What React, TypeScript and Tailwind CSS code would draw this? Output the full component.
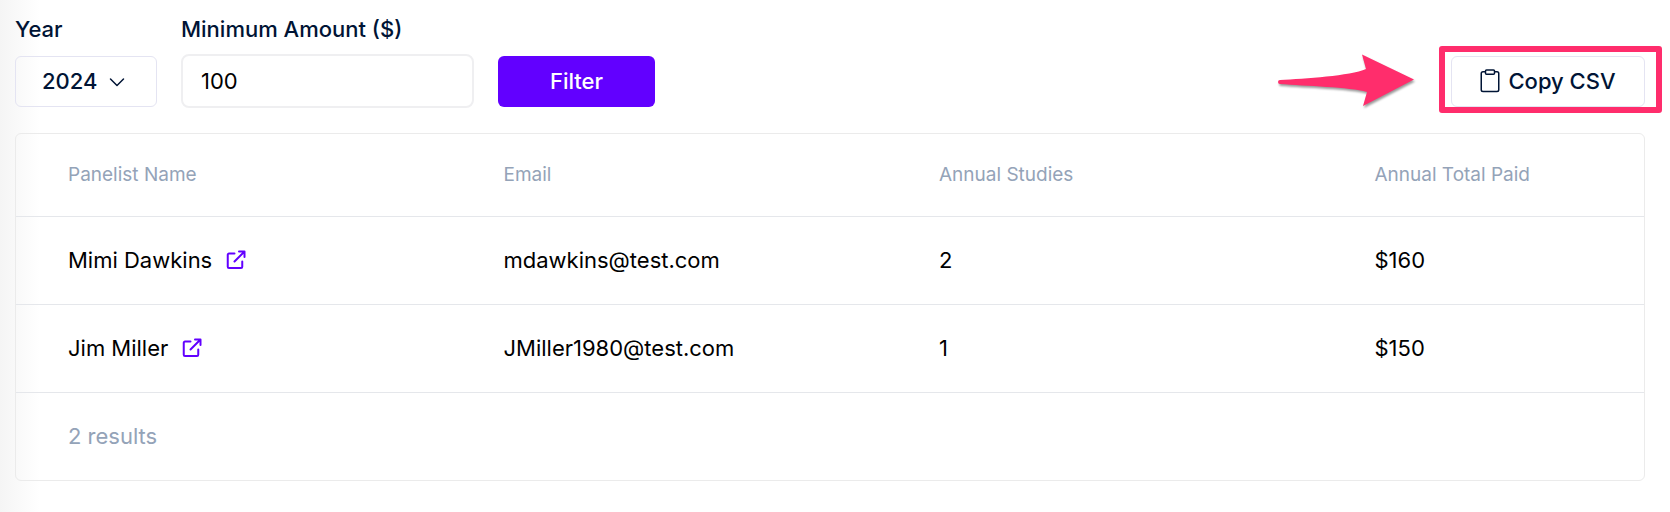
import { useState } from 'react';

type Panelist = { name: string; email: string; studies: number; paid: string };

const panelists: Panelist[] = [
  { name: 'Mimi Dawkins', email: 'mdawkins@test.com', studies: 2, paid: '$160' },
  { name: 'Jim Miller', email: 'JMiller1980@test.com', studies: 1, paid: '$150' },
];

const columns = ['Panelist Name', 'Email', 'Annual Studies', 'Annual Total Paid'];

function ChevronIcon() {
  return (
    <svg
      className="pointer-events-none absolute right-8 h-4 w-4"
      viewBox="0 0 16 16"
      fill="none"
      stroke="#001435"
      strokeWidth="1.5"
      strokeLinecap="round"
      strokeLinejoin="round"
      aria-hidden="true"
    >
      <path d="M1.500 6 8 12.500l6.500-6.500" />
    </svg>
  );
}

function ClipboardIcon() {
  return (
    <svg className="h-6 w-5" viewBox="0 0 20 24" fill="none" stroke="#001435" strokeWidth="1.5" aria-hidden="true">
      <path d="M5.500 2.750H3A1.750 1.750 0 0 0 1.250 4.500v16.250A1.750 1.750 0 0 0 3 22.500h14a1.750 1.750 0 0 0 1.750-1.750V4.500A1.750 1.750 0 0 0 17 2.750h-2.500" />
      <rect x="5.500" y="1" width="9" height="4.250" rx="1" />
    </svg>
  );
}

function ExternalLinkIcon() {
  return (
    <svg
      className="h-5 w-5"
      viewBox="0 0 20 20"
      fill="none"
      stroke="#6200ff"
      strokeWidth="2"
      strokeLinecap="round"
      strokeLinejoin="round"
      aria-hidden="true"
    >
      <path d="M8.500 3.500H3A1.250 1.250 0 0 0 1.750 4.750v12A1.250 1.250 0 0 0 3 18h12a1.250 1.250 0 0 0 1.250-1.250V11.500" />
      <path d="M8.500 11.500 18 2M13 1.500h5.500V7" />
    </svg>
  );
}

function Arrow() {
  return (
    <svg
      className="-my-1 h-15 w-36 drop-shadow-[1px_2px_1px_rgba(0,0,0,0.4)]"
      viewBox="0 0 144 60"
      fill="#ff2d6c"
      aria-hidden="true"
    >
      <path d="M5 29C30 27.500 75 25 91 18L87 3.500 139 28.500 88 55 92 41C75 36 30 35 5 33A2 2 0 0 1 5 29Z" />
    </svg>
  );
}

export default function App() {
  const [year, setYear] = useState('2024');
  const [amount, setAmount] = useState('100');

  return (
    <main className="min-h-screen bg-white bg-linear-to-r from-[#f5f5f5] to-white to-[40px] pt-[15px] pr-[25px] pb-[30px] pl-[15px] font-['Inter',sans-serif] text-[22px] leading-7 text-black">
      <div className="grid grid-cols-[142px_293px_157px_1fr] items-center gap-x-6 gap-y-[11px] text-[#001435]">
        <label htmlFor="year" className="font-medium">
          Year
        </label>
        <label htmlFor="amount" className="col-span-3 font-medium">
          Minimum Amount ($)
        </label>
        <div className="relative flex items-center">
          <select
            id="year"
            value={year}
            onChange={(e) => setYear(e.target.value)}
            className="h-[51px] w-full appearance-none rounded-md border border-[#e4e4f2] bg-transparent pl-[26px] font-medium"
          >
            <option>2024</option>
            <option>2023</option>
          </select>
          <ChevronIcon />
        </div>
        <input
          id="amount"
          value={amount}
          inputMode="numeric"
          onChange={(e) => setAmount(e.target.value)}
          className="h-[54px] w-full rounded-lg border-2 border-[#efeff1] bg-white px-[18px] text-black"
        />
        <button type="button" className="h-[51px] rounded-md bg-[#6200ff] font-medium text-white">
          Filter
        </button>
        <div className="flex items-center justify-end gap-8">
          <Arrow />
          <div className="relative">
            <button
              type="button"
              className="flex h-[51px] w-[194px] items-center justify-center gap-2 rounded-md border border-[#e4e4f2] font-medium"
            >
              <ClipboardIcon />
              Copy CSV
            </button>
            <div className="pointer-events-none absolute -top-[10px] -right-[17px] -bottom-[6px] -left-[12px] rounded-[3px] border-6 border-[#ff2d6c]" />
          </div>
        </div>
      </div>

      <div className="mt-[25px] rounded-md border border-[#ebebeb]">
        <table className="w-full table-fixed text-left">
          <thead>
            <tr className="h-[82px] border-b border-[#e5e7eb] text-[19px] text-[#94a3b8]">
              {columns.map((column) => (
                <th key={column} scope="col" className="w-[26.75%] pl-[52px] font-normal last:w-auto">
                  {column}
                </th>
              ))}
            </tr>
          </thead>
          <tbody>
            {panelists.map((p) => (
              <tr key={p.email} className="h-[88px] border-b border-[#e5e7eb]">
                <td className="pl-[52px]">
                  <div className="flex items-center gap-[14px]">
                    {p.name}
                    <a href="#panelist" aria-label={`Open ${p.name}`}>
                      <ExternalLinkIcon />
                    </a>
                  </div>
                </td>
                <td className="pl-[52px]">{p.email}</td>
                <td className="pl-[52px]">{p.studies}</td>
                <td className="pl-[52px]">{p.paid}</td>
              </tr>
            ))}
          </tbody>
          <tfoot>
            <tr className="h-[88px] text-[#94a3b8]">
              <td colSpan={4} className="pl-[52px]">
                2 results
              </td>
            </tr>
          </tfoot>
        </table>
      </div>
    </main>
  );
}
